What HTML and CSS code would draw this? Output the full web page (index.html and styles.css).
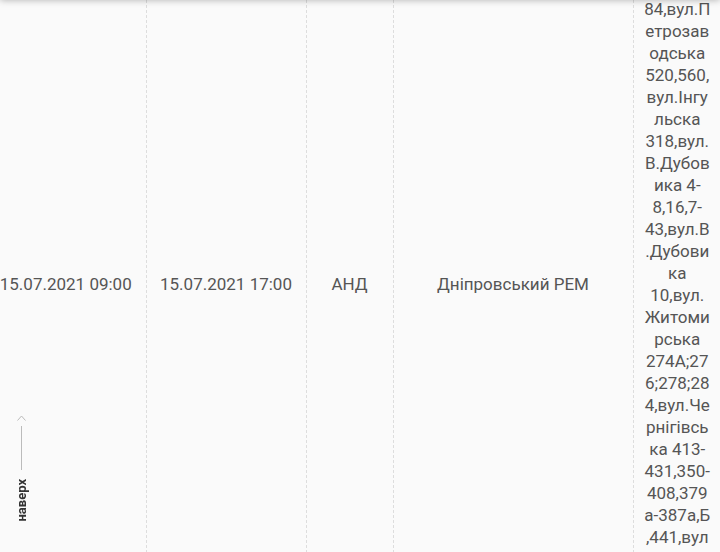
FILE: index.html
```html
<!DOCTYPE html>
<html lang="uk">

<head>
    <meta charset="UTF-8">
    <meta name="viewport" content="width=device-width, initial-scale=1.0">
    <title>Графік відключень</title>

    <link rel="stylesheet" href="styles.css">
</head>

<body>
    <header class="topbar"></header>

    <main class="schedule">
        <table class="outages">
            <colgroup>
                <col class="col-start">
                <col class="col-end">
                <col class="col-org">
                <col class="col-rem">
                <col class="col-addr">
            </colgroup>
            <tbody>
                <tr>
                    <td>15.07.2021 09:00</td>
                    <td>15.07.2021 17:00</td>
                    <td>АНД</td>
                    <td>Дніпровський РЕМ</td>
                    <td class="address">вул.Кооперативна 80-82-84,вул.Петрозаводська 520,560,вул.Інгульска 318,вул.В.Дубовика 4-8,16,7-43,вул.В.Дубовика 10,вул.Житомирська 274А;276;278;284,вул.Чернігівська 413-431,350-408,379а-387а,Б,441,вул Космічна 12,14,16,18</td>
                </tr>
            </tbody>
        </table>
    </main>

    <a href="#" class="to-top">
        <svg class="to-top-arrow" width="9" height="6" viewBox="0 0 9 6">
            <polyline points="0.5,5.5 4.5,1 8.5,5.5" fill="none" stroke="#bbb" stroke-width="1"/>
        </svg>
        <span class="to-top-line"></span>
        <span class="to-top-text">наверх</span>
    </a>
</body>

</html>
```

FILE: styles.css
```css
body {
    margin: 0;
    background-color: #fafafa;
    font-family: Roboto, "Noto Sans", sans-serif;
    color: #555;
    overflow: hidden;
}

.topbar {
    position: fixed;
    top: -60px;
    left: 0;
    right: 0;
    height: 60px;
    background-color: #fff;
    box-shadow: 0 0 7px rgba(0, 0, 0, 0.3);
    z-index: 2;
}

.schedule {
    margin-left: -14px;
    margin-top: -100px;
}

.outages {
    border-collapse: collapse;
    table-layout: fixed;
    width: 736px;
    font-size: 17px;
    line-height: 22px;
}

.col-start { width: 160px; }
.col-end { width: 160px; }
.col-org { width: 87px; }
.col-rem { width: 240px; }
.col-addr { width: 89px; }

.outages td {
    text-align: center;
    vertical-align: middle;
    padding: 10px 12px;
    border-left: 1px dashed #ddd;
}

.outages td:first-child {
    border-left: none;
}

.outages td.address {
    padding: 10px 11px 32px 10px;
    overflow-wrap: anywhere;
}

.to-top {
    position: fixed;
    left: 14px;
    bottom: 30px;
    width: 14px;
    display: flex;
    flex-direction: column;
    align-items: center;
    text-decoration: none;
}

.to-top-arrow {
    display: block;
}

.to-top-line {
    width: 1px;
    height: 44px;
    margin-top: 5px;
    background-color: #bbb;
}

.to-top-text {
    margin-top: 9px;
    writing-mode: vertical-rl;
    transform: rotate(180deg);
    font-size: 13px;
    font-weight: 700;
    color: #333;
}
```
